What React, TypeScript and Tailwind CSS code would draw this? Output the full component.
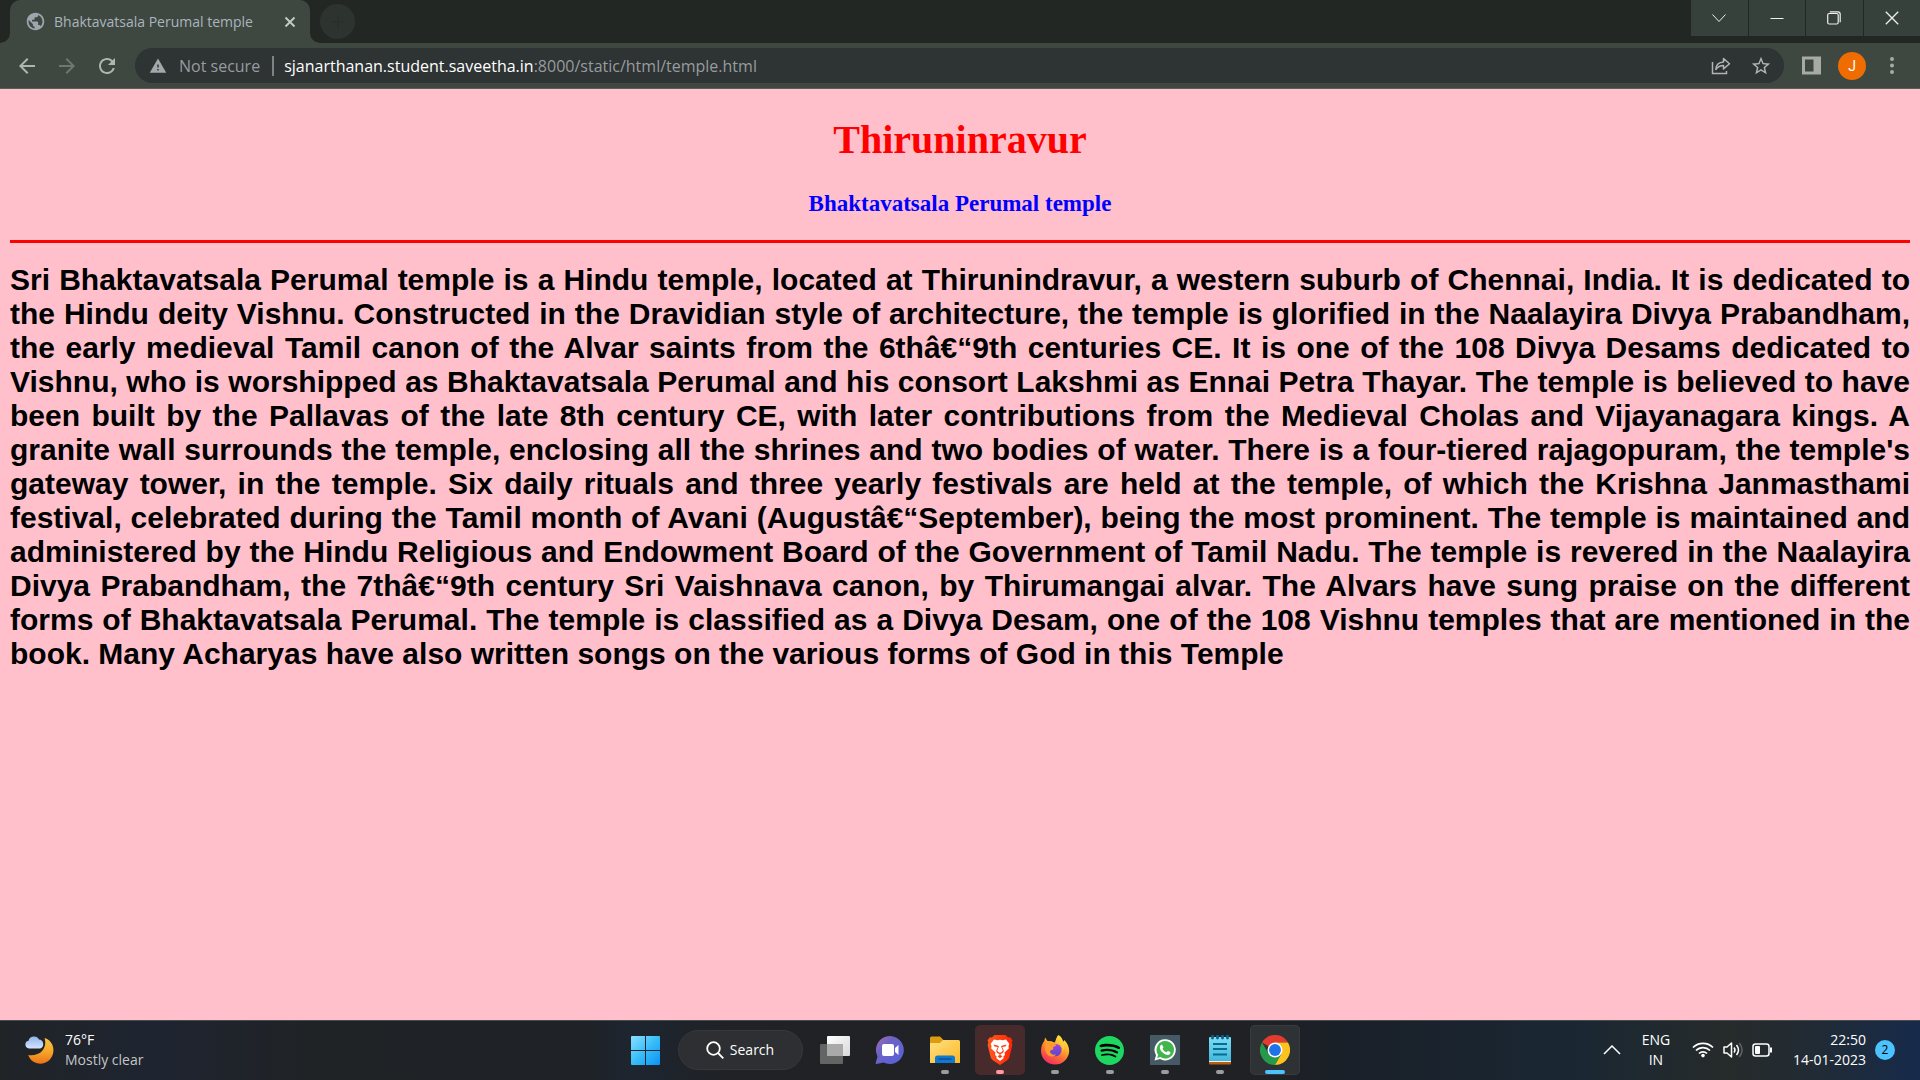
import React, { useState } from "react";
import { MdArrowBack, MdArrowForward, MdPublic, MdRefresh, MdStarBorder, MdWarning } from "react-icons/md";
import { SiSpotify } from "react-icons/si";

function TabStrip() {
  return (
    <div className="flex h-[43px] items-end justify-between bg-[#222723]">
      <div className="flex h-full items-start pl-[10px]">
        <div className="relative flex h-full w-[300px] items-center rounded-t-[10px] bg-[#3f4741] pr-3 pl-[15px] text-[#a9b5bd]">
          <svg className="absolute bottom-0 -left-[10px]" width="10" height="10" viewBox="0 0 10 10" aria-hidden="true">
            <path d="M10 0v10H0A10 10 0 0 0 10 0z" fill="#3f4741" />
          </svg>
          <svg className="absolute bottom-0 -right-[10px]" width="10" height="10" viewBox="0 0 10 10" aria-hidden="true">
            <path d="M0 0v10h10A10 10 0 0 1 0 0z" fill="#3f4741" />
          </svg>
          <MdPublic className="mr-2 size-[21px] shrink-0 text-[#9ea5ad]" />
          <span className="flex-1 whitespace-nowrap text-[14px] leading-5">Bhaktavatsala Perumal temple</span>
          <button aria-label="Close tab" className="flex size-4 items-center justify-center text-[#c3c8c5]">
            <svg width="12" height="12" viewBox="0 0 12 12" fill="none" stroke="currentColor" strokeWidth="2">
              <path d="M1.500 1.500l9 9M10.500 1.500l-9 9" />
            </svg>
          </button>
        </div>
        <button aria-label="New tab" className="mt-1 ml-[10px] flex size-[35px] items-center justify-center rounded-full bg-[#2d3430] text-[#29302c]">
          <svg width="14" height="14" viewBox="0 0 14 14" stroke="currentColor" strokeWidth="2">
            <path d="M7 0v14M0 7h14" />
          </svg>
        </button>
      </div>
      <div className="flex h-9 w-[229px] gap-px self-start text-[#eef0ee] *:flex *:flex-1 *:items-center *:justify-center *:bg-[#37413c]">
        <button aria-label="Search tabs">
          <svg width="14" height="14" viewBox="0 0 14 14" fill="none" stroke="currentColor">
            <path d="M.5 3.500l6.500 7 6.500-7" />
          </svg>
        </button>
        <button aria-label="Minimize">
          <svg width="14" height="14" viewBox="0 0 14 14" fill="none" stroke="currentColor">
            <path d="M.5 7.500h13" />
          </svg>
        </button>
        <button aria-label="Restore">
          <svg width="14" height="14" viewBox="0 0 14 14" fill="none" stroke="currentColor" strokeWidth="1.200">
            <rect x=".7" y="2.500" width="10.500" height="10.500" rx="1.500" />
            <path d="M2.800.8h8q2.400 0 2.400 2.400v8" />
          </svg>
        </button>
        <button aria-label="Close">
          <svg width="14" height="14" viewBox="0 0 14 14" fill="none" stroke="currentColor" strokeWidth="1.300">
            <path d="M.8.8l12.400 12.400M13.200.8L.8 13.200" />
          </svg>
        </button>
      </div>
    </div>
  );
}

function Toolbar() {
  const [address, setAddress] = useState("sjanarthanan.student.saveetha.in:8000/static/html/temple.html");
  const split = address.indexOf(":");
  const host = split < 0 ? address : address.slice(0, split);
  const rest = split < 0 ? "" : address.slice(split);
  return (
    <div className="flex h-[46px] items-center border-b border-[#5a615c] bg-[#3f4741] pr-[18px] pl-[15px] text-[#b1b5b2]">
      <button aria-label="Back" className="flex size-6 items-center justify-center"><MdArrowBack className="size-6" /></button>
      <button aria-label="Forward" className="ml-4 flex size-6 items-center justify-center text-[#70776f]"><MdArrowForward className="size-6" /></button>
      <button aria-label="Reload" className="ml-4 flex size-6 items-center justify-center"><MdRefresh className="size-6" /></button>
      <div className="ml-4 flex h-[35px] flex-1 items-center rounded-full bg-[#2e3334] pr-3 pl-[14px] text-[16px] leading-6">
        <MdWarning className="size-[18px] text-[#a3a8ad]" />
        <span className="ml-3 whitespace-nowrap text-[#979c9e]">Not secure</span>
        <span className="mr-[10px] ml-3 h-5 w-[2px] bg-[#7d8284]" />
        <div className="relative h-6 flex-1 whitespace-nowrap">
          <span aria-hidden="true"><span className="text-white">{host}</span><span className="text-[#979c9e]">{rest}</span></span>
          <input
            aria-label="Address and search bar"
            value={address}
            onChange={(e) => setAddress(e.target.value)}
            className="absolute inset-0 w-full bg-transparent text-transparent caret-white outline-none"
          />
        </div>
        <button aria-label="Share this page" className="flex size-5 items-center justify-center">
          <svg width="20" height="20" viewBox="0 0 20 20" fill="none" stroke="currentColor" strokeWidth="1.500">
            <path d="M1.500 6v11.500h14V15" />
            <path d="M4.800 13.500c.3-4.800 3-7.300 7.700-7.500V2.500l6 5.200-6 5.200V9.500c-3.300 0-5.700 1.200-7.700 4z" strokeLinejoin="round" />
          </svg>
        </button>
        <button aria-label="Bookmark this tab" className="ml-[19px] flex size-[22px] items-center justify-center"><MdStarBorder className="size-[22px]" /></button>
      </div>
      <button aria-label="Side panel" className="ml-[18px] flex size-[19px]">
        <svg width="19" height="19" viewBox="0 0 19 19">
          <path d="M0 .5h19v18H0zM3 3.500v12h8.500v-12z" fill="#a7aaa7" fillRule="evenodd" />
        </svg>
      </button>
      <button aria-label="Profile" className='ml-[17px] flex size-7 items-center justify-center rounded-full bg-[#ef6c00] font-["Roboto",sans-serif] text-[14px] leading-none text-white'>J</button>
      <button aria-label="Menu" className="ml-4 flex w-5 justify-center">
        <svg width="4" height="17" viewBox="0 0 4 17" fill="#a7aaa7">
          <circle cx="2" cy="2" r="2" /><circle cx="2" cy="8.500" r="2" /><circle cx="2" cy="15" r="2" />
        </svg>
      </button>
    </div>
  );
}

function Page() {
  return (
    <main className="flex-1 bg-[#ffc0cb] px-[10px] pt-7">
      <h1 className='text-center font-["Liberation_Serif",serif] text-[40px] leading-[45px] font-bold text-[#ff0000]'>Thiruninravur</h1>
      <h3 className='mt-[29px] text-center font-["Liberation_Serif",serif] text-[23px] leading-[26px] font-bold text-[#0000ff]'>Bhaktavatsala Perumal temple</h3>
      <hr className="mt-[23px] mb-5 border-0 border-t-[3px] border-[#ff0000]" />
      <p className='text-justify font-["Liberation_Sans",sans-serif] text-[30px] leading-[34px] font-bold text-black'>
        Sri Bhaktavatsala Perumal temple is a Hindu temple, located at Thirunindravur, a western suburb of Chennai, India. It is
        dedicated to the Hindu deity Vishnu. Constructed in the Dravidian style of architecture, the temple is glorified in the
        Naalayira Divya Prabandham, the early medieval Tamil canon of the Alvar saints from the 6thâ€“9th centuries CE. It is one of
        the 108 Divya Desams dedicated to Vishnu, who is worshipped as Bhaktavatsala Perumal and his consort Lakshmi as Ennai Petra
        Thayar. The temple is believed to have been built by the Pallavas of the late 8th century CE, with later contributions from
        the Medieval Cholas and Vijayanagara kings. A granite wall surrounds the temple, enclosing all the shrines and two bodies of
        water. There is a four-tiered rajagopuram, the temple's gateway tower, in the temple. Six daily rituals and three yearly
        festivals are held at the temple, of which the Krishna Janmasthami festival, celebrated during the Tamil month of Avani
        (Augustâ€“September), being the most prominent. The temple is maintained and administered by the Hindu Religious and
        Endowment Board of the Government of Tamil Nadu. The temple is revered in the Naalayira Divya Prabandham, the 7thâ€“9th
        century Sri Vaishnava canon, by Thirumangai alvar. The Alvars have sung praise on the different forms of Bhaktavatsala
        Perumal. The temple is classified as a Divya Desam, one of the 108 Vishnu temples that are mentioned in the book. Many
        Acharyas have also written songs on the various forms of God in this Temple
      </p>
    </main>
  );
}

function WeatherIcon() {
  return (
    <svg width="30" height="30" viewBox="0 0 30 30" aria-hidden="true">
      <defs>
        <linearGradient id="moon" x1="0" y1="0" x2="0" y2="1"><stop offset="0" stopColor="#f9c440" /><stop offset=".5" stopColor="#f5a92b" /><stop offset="1" stopColor="#ee7317" /></linearGradient>
        <linearGradient id="cloud" x1="0" y1="0" x2="0" y2="1"><stop offset="0" stopColor="#8fb4ea" /><stop offset="1" stopColor="#d5e3fb" /></linearGradient>
      </defs>
      <path d="M19.500 3C27 5 30 13 27.800 19.500 25.500 26.500 18.500 30 12 28.200 7.500 27 4.500 24 3.200 20c5 .8 11-.4 14.300-4.500 3-3.700 3.400-8.200 2-12.500z" fill="url(#moon)" />
      <path d="M4 13.500a3.900 3.900 0 0 1-.5-7.700A5.600 5.600 0 0 1 14 4.600a4.600 4.600 0 0 1 1.200 8.900z" fill="url(#cloud)" />
    </svg>
  );
}

function StartIcon() {
  return (
    <svg width="29" height="29" viewBox="0 0 29 29">
      <defs><linearGradient id="win" x1="0" y1="0" x2="1" y2="1"><stop offset="0" stopColor="#8be0ff" /><stop offset=".5" stopColor="#38bdf8" /><stop offset="1" stopColor="#0a93f5" /></linearGradient></defs>
      <path d="M1 0h13v14H0V1a1 1 0 0 1 1-1zM15 0h13a1 1 0 0 1 1 1v13H15zM0 15h14v14H1a1 1 0 0 1-1-1zM15 15h14v13a1 1 0 0 1-1 1H15z" fill="url(#win)" />
    </svg>
  );
}

function TaskViewIcon() {
  return (
    <svg width="30" height="28" viewBox="0 0 30 28">
      <defs><linearGradient id="tv" x1="0" y1="0" x2="1" y2="1"><stop offset="0" stopColor="#fff" /><stop offset="1" stopColor="#d8d8d8" /></linearGradient></defs>
      <rect x="0" y="8" width="23" height="20" rx="1" fill="#646464" />
      <rect x="7" y="0" width="23" height="20" rx="1" fill="url(#tv)" />
      <path d="M7 8h16v12H7z" fill="#a9a9a9" />
    </svg>
  );
}

function ChatIcon() {
  return (
    <svg width="30" height="30" viewBox="0 0 30 30">
      <defs><linearGradient id="chat" x1="0" y1="0" x2="1" y2="1"><stop offset="0" stopColor="#a96fae" /><stop offset=".35" stopColor="#6d63c4" /><stop offset="1" stopColor="#5660dc" /></linearGradient></defs>
      <path d="M15 1a14 14 0 1 1-6.500 26.500L1.500 29c-.7 0-1-.4-.8-1l1.800-6.500A14 14 0 0 1 15 1z" fill="url(#chat)" />
      <rect x="7" y="9" width="12" height="12" rx="2" fill="#fff" />
      <path d="M20 13l3.500-3v10L20 17z" fill="#fff" />
    </svg>
  );
}

function FolderIcon() {
  return (
    <svg width="30" height="28" viewBox="0 0 30 28">
      <defs><linearGradient id="fold" x1="0" y1="0" x2="1" y2="1"><stop offset="0" stopColor="#ffe083" /><stop offset="1" stopColor="#fdb924" /></linearGradient></defs>
      <path d="M0 2a1.500 1.500 0 0 1 1.500-1.500H10L13.500 4H28v8H0z" fill="#dd9b0d" />
      <path d="M0 7h10l3-3h15.500A1.500 1.500 0 0 1 30 5.500V27H0z" fill="url(#fold)" />
      <path d="M5 27v-5a2.500 2.500 0 0 1 2.500-2.500h15A2.500 2.500 0 0 1 25 22v5z" fill="#0f78d0" />
      <path d="M8.500 23h13" stroke="#0a4b8c" strokeWidth="1.300" />
    </svg>
  );
}

function BraveIcon() {
  return (
    <svg width="26" height="30" viewBox="0 0 26 30">
      <defs><linearGradient id="brave" x1="0" y1="0" x2="1" y2="0"><stop offset="0" stopColor="#ff5a1c" /><stop offset="1" stopColor="#ff2505" /></linearGradient></defs>
      <path d="M7.500 0h11l2.600 2.600 2-.3 2.400 2.900-.8 2.400.7 2.400-3 12c-.4 1.500-1 2.300-2.200 3.200L13 30l-7.200-4.800c-1.200-.9-1.800-1.700-2.200-3.200l-3-12 .7-2.400-.8-2.400 2.400-2.900 2 .3z" fill="url(#brave)" />
      <path d="M7 4.500l3.200.8 2.800-.6 2.800.6 3.200-.8 3.300 4.300-.8 2.400.3 2.200-4.300 4.200.5 2.400-1.600 1.300.2 2L13 26l-3.600-2.700.2-2L8 20l.5-2.400-4.300-4.200.3-2.200-.8-2.400z" fill="#fff" />
      <path d="M6.500 9.500l4.800 1.200c.6.200.6.700.4 1.200l-1.500 3.600 1 1.400 1.800.8 1.800-.8 1-1.400-1.500-3.600c-.2-.5-.2-1 .4-1.200l4.800-1.200-1 2-3.300.5 1.700 4-1.100 1.900-2.100 1-.3 1 2 1.300-2.400 2-2.400-2 2-1.300-.3-1-2.100-1-1.100-1.900 1.700-4-3.300-.5z" fill="#fb3f12" />
    </svg>
  );
}

function FirefoxIcon() {
  return (
    <svg width="30" height="30" viewBox="0 0 30 30">
      <defs>
        <linearGradient id="ff" x1=".8" y1="0" x2=".25" y2="1"><stop offset="0" stopColor="#fff04a" /><stop offset=".35" stopColor="#ffb32c" /><stop offset=".65" stopColor="#ff6a35" /><stop offset="1" stopColor="#ee2767" /></linearGradient>
        <linearGradient id="ffp" x1="0" y1="0" x2="0" y2="1"><stop offset="0" stopColor="#a145e0" /><stop offset="1" stopColor="#5b45c9" /></linearGradient>
      </defs>
      <path d="M18.500 0c2.500 1.300 4 4 4.800 6.800l1-1.800c3.200 3 4.900 7.200 4.900 11.200A14.200 14.200 0 0 1 15 29.500C7 29.500 1 23.500 1 16c0-4.200 1.300-7.500 3.300-10l.8-3.500L7.500 6 12 6.200l3 1.300c.2-3 1.300-5.500 3.500-7.500z" fill="url(#ff)" />
      <path d="M14 7.500l-2-1.300c.6-2 1-3.700 1.200-6.200l3.500 2-1.500 4z" fill="#202326" />
      <circle cx="15.300" cy="15" r="6.300" fill="url(#ffp)" />
      <path d="M6 7.500c2.500-.8 5-.2 6.500 1.200l4.200.8c-.8 1.800-2.300 2.300-3.800 2.700 1 1.300.3 2.500-1.300 2.700-1.800.3-2 1.600-1 3 1.500 1.900 3.500 2.200 5.500 1.300-1.800 2.800-6.300 3-8.700.2C4.500 16 4 11 6 7.500z" fill="#ff9a2c" />
      <path d="M18 7.500c3.800 1.500 5.600 5 4.500 9 2.500-3.500 2.500-8-1-11z" fill="#ffcd36" />
    </svg>
  );
}

function SpotifyIcon() {
  return (
    <span className="flex size-[29px] items-center justify-center rounded-full bg-[radial-gradient(circle,#000_60%,transparent_65%)]">
      <SiSpotify className="size-[29px] text-[#1ed760]" />
    </span>
  );
}

function WhatsAppIcon() {
  return (
    <svg width="30" height="30" viewBox="0 0 30 30">
      <path d="M0 0h30v30H0z" fill="#455a64" />
      <path d="M15.300 4.200a10.600 10.600 0 1 1-5.200 19.900L4.500 25.600 6 20.200a10.600 10.600 0 0 1 9.300-16z" fill="#fff" />
      <path d="M15.300 6.100a8.700 8.700 0 1 1-4.700 16l-3.400.9.900-3.300a8.700 8.700 0 0 1 7.200-13.600z" fill="#42b64c" />
      <path d="M12.400 10.300c-.5-.8-1.700-.4-2.200.6-1.100 2.200.4 4.800 2.500 6.700 2.100 1.900 4.900 3.100 6.800 1.900 1-.6 1.300-2 .8-2.400l-2.300-1.100c-.7-.1-.9 1-1.500 1.200-1.800-.5-3.400-2-4-3.500.2-.5 1-.9.900-1.500z" fill="#fff" />
    </svg>
  );
}

function NotepadIcon() {
  return (
    <svg width="22" height="30" viewBox="0 0 22 30">
      <defs><linearGradient id="note" x1="0" y1="0" x2="0" y2="1"><stop offset="0" stopColor="#7fdcf2" /><stop offset="1" stopColor="#42b8dc" /></linearGradient></defs>
      <path d="M0 26h22v2.500a1 1 0 0 1-1 1H1a1 1 0 0 1-1-1z" fill="#b8600e" />
      <path d="M0 25h22v2H0z" fill="#f1f1f1" />
      <path d="M1 2h20a1 1 0 0 1 1 1v23H0V3a1 1 0 0 1 1-1z" fill="url(#note)" />
      <path d="M4 9h14M4 14h14M4 19.500h14" stroke="#086b96" strokeWidth="2" />
      <path d="M3.500 1v2M8.500 1v2M13.500 1v2M18.500 1v2" stroke="#07638b" strokeWidth="2.800" strokeLinecap="round" />
    </svg>
  );
}

function ChromeIcon() {
  return (
    <svg width="30" height="30" viewBox="0 0 48 48">
      <path d="M24 24L3.200 12A24 24 0 0 1 44.800 12H24z" fill="#e33b2e" />
      <path d="M24 24l10.400 6L24 48A24 24 0 0 1 3.200 12l10.400 18z" fill="#259a4a" />
      <path d="M24 12h20.800A24 24 0 0 1 24 48l10.400-18z" fill="#fcc31e" />
      <circle cx="24" cy="24" r="12" fill="#fff" />
      <circle cx="24" cy="24" r="9.500" fill="#1f72e8" />
    </svg>
  );
}

type TaskbarApp = { label: string; icon: React.ReactNode; dot?: string; box?: string };

const apps: TaskbarApp[] = [
  { label: "Task view", icon: <TaskViewIcon /> },
  { label: "Chat", icon: <ChatIcon /> },
  { label: "File Explorer", icon: <FolderIcon />, dot: "w-2 bg-[#9b9c9e]" },
  { label: "Brave", icon: <BraveIcon />, dot: "w-2 bg-[#ff99a4]", box: "bg-[#472a2c]" },
  { label: "Firefox", icon: <FirefoxIcon />, dot: "w-2 bg-[#9b9c9e]" },
  { label: "Spotify", icon: <SpotifyIcon />, dot: "w-2 bg-[#9b9c9e]" },
  { label: "WhatsApp", icon: <WhatsAppIcon />, dot: "w-2 bg-[#9b9c9e]" },
  { label: "Notepad", icon: <NotepadIcon />, dot: "w-2 bg-[#9b9c9e]" },
  { label: "Chrome", icon: <ChromeIcon />, dot: "w-5 bg-[#4cc2ff]", box: "bg-[#2f3235] ring-1 ring-inset ring-[#383b3e]" },
];

function Taskbar() {
  return (
    <footer className="grid h-[60px] grid-cols-[1fr_auto_1fr] items-center border-t border-[#474b4d] bg-[linear-gradient(90deg,#202427_0%,#1e2430_8%,#202326_16%,#1f2226_30%,#1d2530_33%,#202225_38%,#1f2124_66%,#1a2029_70%,#1a2733_82%,#262b2b_90%,#222b33_94%,#162a4a_100%)] pb-px text-[14px] leading-5 text-white">
      <button className="flex items-center gap-[10px] justify-self-start pl-[25px] text-left">
        <WeatherIcon />
        <span className="flex flex-col">
          <span>76°F</span>
          <span className="text-[#c3c5c7]">Mostly clear</span>
        </span>
      </button>
      <nav aria-label="Taskbar" className="flex items-center gap-[7px]">
        <button aria-label="Start" className="flex size-[50px] items-center justify-center"><StartIcon /></button>
        <button className="flex h-10 w-[125px] items-center justify-center gap-[6px] rounded-full border border-[#36393b] bg-[#2d2f32]">
          <svg width="18" height="18" viewBox="0 0 18 18" fill="none" stroke="currentColor" strokeWidth="1.800" aria-hidden="true">
            <circle cx="7.500" cy="7.500" r="6.300" /><path d="M12 12l5.300 5.300" />
          </svg>
          Search
        </button>
        <div className="flex gap-[5px]">
          {apps.map((a) => (
            <button key={a.label} aria-label={a.label} className={`relative flex size-[50px] items-center justify-center rounded-[5px] ${a.box ?? ""}`}>
              {a.icon}
              {a.dot && <span className={`absolute bottom-px left-1/2 h-1 -translate-x-1/2 rounded-full ${a.dot}`} />}
            </button>
          ))}
        </div>
      </nav>
      <div className="flex items-center justify-self-end pr-[25px]">
        <button aria-label="Show hidden icons" className="flex">
          <svg width="18" height="10" viewBox="0 0 18 10" fill="none" stroke="currentColor" strokeWidth="1.500"><path d="M1 9l8-8 8 8" /></svg>
        </button>
        <button className="ml-5 flex w-[30px] flex-col items-center"><span>ENG</span><span>IN</span></button>
        <button aria-label="Network, volume and battery" className="ml-[21px] flex items-center gap-[9px]">
          <svg width="22" height="16" viewBox="0 0 22 16" fill="none" stroke="currentColor" strokeWidth="1.700">
            <path d="M1 5.500a14.300 14.300 0 0 1 20 0M4 8.500a10 10 0 0 1 14 0M7 11.500a5.700 5.700 0 0 1 8 0" />
            <circle cx="11" cy="13.600" r="1.800" fill="currentColor" stroke="none" />
          </svg>
          <svg width="20" height="18" viewBox="0 0 20 18" fill="none" stroke="currentColor" strokeWidth="1.500" strokeLinejoin="round">
            <path d="M1 6h3l4.500-4v14L4 12H1z" />
            <path d="M11 6.500q2 2.500 0 5M13.500 4q4 5 0 10" />
            <path d="M16.300 2q5.500 7 0 14" stroke="#5d6264" />
          </svg>
          <svg width="20" height="14" viewBox="0 0 20 14" fill="none" stroke="currentColor" strokeWidth="1.500">
            <rect x="1" y="1" width="16" height="12" rx="2.500" />
            <rect x="3" y="3" width="5" height="8" rx="1" fill="currentColor" stroke="none" />
            <path d="M19 4.500v5" strokeWidth="2" />
          </svg>
        </button>
        <button className="ml-[21px] flex flex-col items-end whitespace-nowrap"><span>22:50</span><span>14-01-2023</span></button>
        <button aria-label="2 notifications" className="ml-[9px] flex size-5 items-center justify-center rounded-full bg-[#4cc2ff] text-[12px] leading-none text-black">2</button>
      </div>
    </footer>
  );
}

export default function App() {
  return (
    <div className='flex min-h-screen flex-col font-["Open_Sans","Noto_Sans",sans-serif]'>
      <TabStrip />
      <Toolbar />
      <Page />
      <Taskbar />
    </div>
  );
}
